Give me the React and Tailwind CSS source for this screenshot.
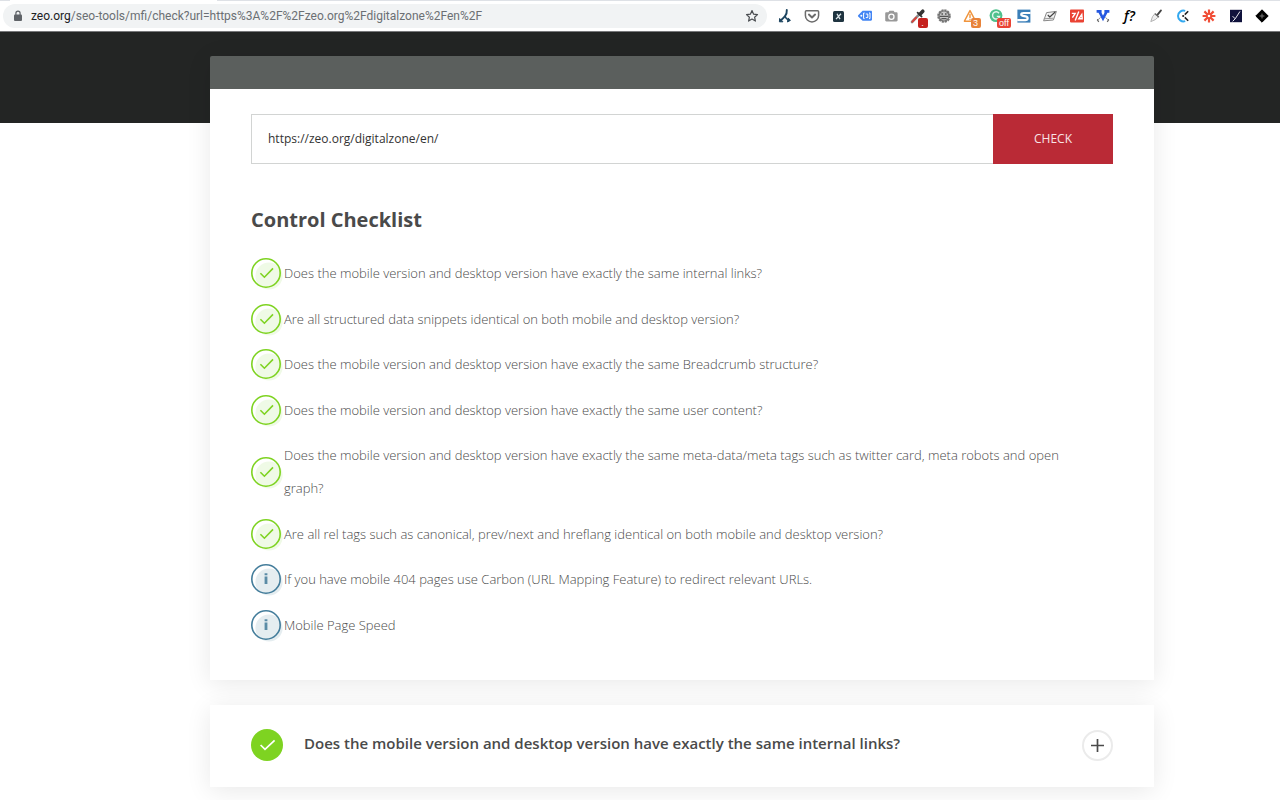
import React, { useState } from 'react';

const checklist = [
  { status: 'ok', text: 'Does the mobile version and desktop version have exactly the same internal links?' },
  { status: 'ok', text: 'Are all structured data snippets identical on both mobile and desktop version?' },
  { status: 'ok', text: 'Does the mobile version and desktop version have exactly the same Breadcrumb structure?' },
  { status: 'ok', text: 'Does the mobile version and desktop version have exactly the same user content?' },
  { status: 'ok', text: 'Does the mobile version and desktop version have exactly the same meta-data/meta tags such as twitter card, meta robots and open graph?' },
  { status: 'ok', text: 'Are all rel tags such as canonical, prev/next and hreflang identical on both mobile and desktop version?' },
  { status: 'info', text: 'If you have mobile 404 pages use Carbon (URL Mapping Feature) to redirect relevant URLs.' },
  { status: 'info', text: 'Mobile Page Speed' },
];

// Toolbar extension icons, all drawn on a 16x16 grid
const extensions = [
  {
    name: 'Link redirect',
    icon: (
      <g fill="none" stroke="#1d4560" strokeLinecap="round">
        <path d="M9.8 2c.2 2.4-.4 4.4-1.8 6.2-1.2 1.6-2.6 2.8-4.4 4.4" strokeWidth="1.9" />
        <path d="M8.2 8.4c.6 1.8 1.8 3 3.4 3.6" strokeWidth="1.6" />
        <path d="M2.6 10.8l-.2 3h3.2z" fill="#1d4560" strokeWidth="1" />
        <path d="M11.4 10.2l2 2.2-2.6 1.4z" fill="#1d4560" strokeWidth="1" />
      </g>
    ),
  },
  {
    name: 'Pocket',
    icon: (
      <g fill="none" stroke="#6c6c6c" strokeWidth="1.5" strokeLinecap="round" strokeLinejoin="round">
        <path d="M2.4 2.8h11.2c.6 0 1 .4 1 1v3.6a6.6 6.6 0 0 1-13.2 0V3.8c0-.6.4-1 1-1z" />
        <path d="M4.9 6.6L8 9.5l3.1-2.9" strokeWidth="2" />
      </g>
    ),
  },
  {
    name: 'XPath',
    icon: (
      <g>
        <rect x="3" y="3" width="11" height="11" rx="1.5" fill="#1f3440" />
        <path d="M7 5.7l3 5.4M11 5.7l-5 5.4" stroke="#dfe8ec" strokeWidth="1.3" fill="none" />
      </g>
    ),
  },
  {
    name: 'Tag assistant',
    icon: (
      <g>
        <path d="M5.6 2.8h8.2c.7 0 1.2.5 1.2 1.2v7.6c0 .7-.5 1.2-1.2 1.2H5.6L1.2 8.6a1 1 0 0 1 0-1.4z" fill="#4285f4" />
        <circle cx="4.3" cy="7.8" r="1" fill="#fff" />
        <path d="M7.6 5h-1v5.6h1M12 5h1v5.6h-1M8.8 6h2v3.6h-2" fill="none" stroke="#fff" strokeWidth="1" />
      </g>
    ),
  },
  {
    name: 'Screenshot',
    icon: (
      <g>
        <path d="M3.4 4.2h2l1-1.4h4.2l1 1.4h1.8c.7 0 1.2.5 1.2 1.2v6.8c0 .7-.5 1.2-1.2 1.2h-10c-.7 0-1.2-.5-1.2-1.2V5.4c0-.7.5-1.2 1.2-1.2z" fill="#999" />
        <circle cx="8.4" cy="8.7" r="2.6" fill="none" stroke="#fff" strokeWidth="1.3" />
      </g>
    ),
  },
  {
    name: 'Color picker',
    badge: '.',
    badgeClass: 'bg-[#c5221f] w-[10px]',
    icon: (
      <g strokeLinecap="round">
        <path d="M2 14l7-7.4" stroke="#8a8a8a" strokeWidth="2.6" />
        <path d="M2.4 13.6L6 9.8" stroke="#d8443c" strokeWidth="2" />
        <path d="M7.6 4.6l4 4" stroke="#333" strokeWidth="1.8" />
        <path d="M10.2 6l2.6-2.8" stroke="#333" strokeWidth="3.6" />
      </g>
    ),
  },
  {
    name: 'Robots settings',
    icon: (
      <g fill="none">
        <circle cx="8" cy="8" r="5.8" stroke="#777" strokeWidth="2" strokeDasharray="2.2 .8" />
        <circle cx="8" cy="8" r="5" fill="#c8c8c8" stroke="#707070" strokeWidth="1.2" />
        <path d="M3.6 8.4h8.8M5.4 10.6h5.2" stroke="#555" strokeWidth="1.2" />
        <path d="M5.4 6h1.6M9 6h1.6" stroke="#555" strokeWidth="1.4" />
      </g>
    ),
  },
  {
    name: 'Issues',
    badge: '3',
    badgeClass: 'bg-[#e8833a] w-[10px]',
    icon: (
      <g fill="none" stroke="#f0943c" strokeWidth="1.4" strokeLinejoin="round" strokeLinecap="round">
        <path d="M7 2.6l5.6 10.6H1.4z" />
        <path d="M7 6.4v3.2M7 11.4v.2" />
      </g>
    ),
  },
  {
    name: 'Grammar check',
    badge: 'off',
    badgeClass: 'bg-[#e94335] w-[14px]',
    icon: (
      <g>
        <circle cx="7" cy="7.6" r="6.4" fill="#4fc08d" />
        <path d="M10 5.2a3.6 3.6 0 1 0 .6 3.2H7.8" fill="none" stroke="#e4f7ee" strokeWidth="1.4" />
      </g>
    ),
  },
  {
    name: 'Similar pages',
    icon: (
      <g fill="none">
        <rect x="1.4" y="1.6" width="13" height="13" fill="#3b7fb8" />
        <path d="M14.6 5H7.4C4.6 5 4.6 7.4 7 7.8l2.6.5c3 .6 2.6 3.9-.4 3.9H1.2" stroke="#fff" strokeWidth="2.2" />
      </g>
    ),
  },
  {
    name: 'Check my links',
    icon: (
      <g fill="none" stroke="#666" strokeWidth="1" strokeLinejoin="round">
        <path d="M4.6 4.6l9.8-1.2-3 8.6-9.8.8z" fill="#f2f2f2" stroke="#888" />
        <path d="M1.8 10.8l9.8-.6" stroke="#999" />
        <path d="M5.8 7l2 2 5.4-5" stroke="#444" strokeWidth="1.2" />
      </g>
    ),
  },
  {
    name: 'Redirect path',
    icon: (
      <g>
        <rect x="1" y="1.6" width="14" height="12.8" rx=".8" fill="#ea4233" />
        <path d="M2.8 5.4h3.4L3.4 9.6M9.8 3.6L6.2 12.4M13.2 10.8H9.8l3-4.4z" fill="none" stroke="#fff" strokeWidth="1.4" />
      </g>
    ),
  },
  {
    name: 'Keyword surfer',
    icon: (
      <g fill="none">
        <path d="M1.6 3.4h5M9.4 3.4h5M4.4 3.6L8 10.4l3.6-6.8" stroke="#2457e0" strokeWidth="2.6" />
        <path d="M5.4 9.4c-1 1-1 2.2-3.4 2.2M10.6 9.4c1 1 1 2.2 3.4 2.2" stroke="#888" strokeWidth="1" />
        <path d="M2.2 11.6l1.6 2.2M13.8 11.6l-1.6 2.2" stroke="#666" strokeWidth="1.2" />
      </g>
    ),
  },
  { name: 'WhatFont', label: 'f?' },
  {
    name: 'Cache cleaner',
    icon: (
      <g fill="none" strokeLinecap="round">
        <path d="M13 2.4L9.6 6.6" stroke="#444" strokeWidth="1.8" />
        <path d="M7 6.2l3.2 2.8L7.4 11.6l-4.6 2L4.4 9z" fill="#eee" stroke="#aaa" strokeWidth=".9" />
        <path d="M7.2 5.8l3.4 3" stroke="#666" strokeWidth="1.2" />
      </g>
    ),
  },
  {
    name: 'Clockify',
    icon: (
      <g fill="none" strokeWidth="2">
        <path d="M10.2 2.9A5.4 5.4 0 1 0 10.2 13.1" stroke="#32a8ef" />
        <path d="M9.8 6.6l3.4-3.4M9.8 9.4l3.4 3.4" stroke="#222" strokeWidth="1.6" />
        <circle cx="8.2" cy="8" r="1.1" fill="#222" stroke="none" />
      </g>
    ),
  },
  {
    name: 'Zapier',
    icon: (
      <g fill="none" stroke="#f04e37" strokeWidth="2.2">
        <path d="M8 1.6v4.6M8 9.8v4.6M1.6 8h4.6M9.8 8h4.6M3.4 3.4l3.3 3.3M9.3 9.3l3.3 3.3M12.6 3.4L9.3 6.7M6.7 9.3l-3.3 3.3" />
        <circle cx="8" cy="8" r="2" strokeWidth="1.4" />
      </g>
    ),
  },
  {
    name: 'Xenu',
    icon: (
      <g>
        <rect x="2" y="1.8" width="12" height="12.4" fill="#10123c" />
        <path d="M4.6 8.2l2.6 2.6 4.8-7.4M4.6 13.4l2.6-2.6" fill="none" stroke="#e8e8f0" strokeWidth="1" />
      </g>
    ),
  },
  {
    name: 'Diamond',
    icon: (
      <g>
        <path d="M8 1.8L14.2 8 8 14.2 1.8 8z" fill="#000" stroke="#000" strokeWidth="1" strokeLinejoin="round" />
        <path d="M8 5.6v4.8M5.6 8h4.8" stroke="#777" strokeWidth="1" />
      </g>
    ),
  },
];

const ExtensionButton = ({ name, icon, label, badge, badgeClass }) => (
  <button type="button" aria-label={name} className="relative flex h-4 w-4 items-center justify-center">
    {icon && <svg viewBox="0 0 16 16" className="h-4 w-4">{icon}</svg>}
    {label && <span className="font-['Open_Sans',sans-serif] text-sm font-semibold italic leading-4 text-black">{label}</span>}
    {badge && (
      <span className={`absolute -bottom-1 left-2 h-[10px] rounded-xs text-center font-['Liberation_Sans',sans-serif] text-[9px] leading-[10px] text-white ${badgeClass}`}>
        {badge}
      </span>
    )}
  </button>
);

const BrowserBar = () => (
  <div className="border-b border-[#77787a] bg-white font-[Roboto,sans-serif]">
    <div className="flex h-px">
      <div className="w-[10px] bg-[#dee1e6]" />
      <div className="w-[207px] bg-white" />
      <div className="flex-1 bg-[#dee1e6]" />
    </div>
    <div className="flex h-[30px] items-center pl-[3px] pr-[10px]">
      <div className="flex h-6 flex-1 items-center rounded-full bg-[#f1f3f4] pl-[10px] pr-2 text-xs">
        <svg viewBox="0 0 10 12" className="mr-2 h-3 w-[10px]">
          <rect x="1" y="4.6" width="8" height="6.4" rx="1" fill="#5f6368" />
          <path d="M2.9 5V3.2a2.1 2.1 0 0 1 4.2 0V5" fill="none" stroke="#5f6368" strokeWidth="1.2" />
        </svg>
        <label htmlFor="address" className="text-[#202124]">zeo.org</label>
        <input
          id="address"
          type="text"
          readOnly
          className="min-w-0 flex-1 bg-transparent text-[#6b6f73] outline-none"
          value="/seo-tools/mfi/check?url=https%3A%2F%2Fzeo.org%2Fdigitalzone%2Fen%2F"
        />
        <button type="button" aria-label="Bookmark this page">
          <svg viewBox="0 0 14 14" className="h-[14px] w-[14px]">
            <path d="M7 1.6l1.6 3.6 3.9.4-2.9 2.6.8 3.9L7 10.1l-3.4 2 .8-3.9-2.9-2.6 3.9-.4z" fill="none" stroke="#4a4d51" strokeWidth="1.2" strokeLinejoin="round" />
          </svg>
        </button>
      </div>
      <div className="ml-[10px] flex w-[493px] items-center justify-between">
        {extensions.map((ext) => (
          <ExtensionButton key={ext.name} {...ext} />
        ))}
      </div>
    </div>
  </div>
);

const StatusIcon = ({ status }) => (
  <svg viewBox="0 0 33 33" className="h-[33px] w-[33px] shrink-0">
    <circle cx="18" cy="19" r="13.6" fill={status === 'ok' ? '#effae6' : '#e5edf0'} />
    <circle cx="15" cy="16" r="14.2" fill="none" stroke={status === 'ok' ? '#7ed321' : '#447d9b'} strokeWidth="1.6" />
    {status === 'ok' ? (
      <path d="M9.4 16.2l4 4 8.6-8.8" fill="none" stroke="#7ed321" strokeWidth="1.6" />
    ) : (
      <path d="M13.6 10.2h2.8v2h-2.8zM13.6 13.6h2.8v7.4h-2.8z" fill="#5b8ca6" />
    )}
  </svg>
);

const App = () => {
  const [url, setUrl] = useState('https://zeo.org/digitalzone/en/');
  const [open, setOpen] = useState(false);

  return (
    <div className="bg-white font-['Open_Sans',sans-serif]">
      <BrowserBar />
      <div className="h-[91px] bg-[#232524]" />

      <main className="relative -mt-[67px] pb-4 pl-[210px] pr-[126px]">
        {/* Checker form and checklist */}
        <section className="mb-[25px] shadow-[0_4px_24px_rgba(0,0,0,0.09)]">
          <div className="h-[33px] rounded-t-xs bg-[#5b5f5d]" />
          <div className="bg-white px-[41px] pb-[38px] pt-[25px]">
            <form className="flex h-[50px]" onSubmit={(e) => e.preventDefault()}>
              <input
                type="text"
                aria-label="Page URL"
                className="min-w-0 flex-1 border border-r-0 border-[#d2d4d3] px-4 text-xs text-[#333] outline-none"
                value={url}
                onChange={(e) => setUrl(e.target.value)}
              />
              <button type="submit" className="w-[120px] bg-[#ba2a36] text-xs text-[#f8e4e6]">CHECK</button>
            </form>

            <h2 className="mt-[41px] text-xl font-bold leading-[30px] text-[#4a4a4a]">Control Checklist</h2>
            <ul className="mt-[22px] flex min-h-[385px] flex-col justify-between">
              {checklist.map((item) => (
                <li key={item.text} className="flex items-center pr-5">
                  <StatusIcon status={item.status} />
                  <span className="text-[13px] font-light leading-[33px] text-[#4a4a4a]">{item.text}</span>
                </li>
              ))}
            </ul>
          </div>
        </section>

        {/* Result accordion */}
        <section className="flex h-[82px] items-center bg-white px-[41px] pb-[2px] shadow-[0_4px_24px_rgba(0,0,0,0.09)]">
          <svg viewBox="0 0 32 32" className="h-8 w-8 shrink-0">
            <circle cx="16" cy="16" r="16" fill="#7ed321" />
            <path d="M9.6 16l4.4 4.4 9.6-9" fill="none" stroke="#fff" strokeWidth="1.7" />
          </svg>
          <h3 className="ml-[21px] flex-1 pb-1 text-[15px] font-semibold leading-6 text-[#4a4a4a]">
            {checklist[0].text}
          </h3>
          <button
            type="button"
            aria-label="Toggle details"
            aria-expanded={open}
            className="flex h-[31px] w-[31px] items-center justify-center rounded-full border-2 border-[#ebebeb]"
            onClick={() => setOpen(!open)}
          >
            <svg viewBox="0 0 13 13" className="h-[13px] w-[13px]">
              <path d="M6.5 0v13M0 6.5h13" stroke="#4a4a4a" strokeWidth="1.7" />
            </svg>
          </button>
        </section>
      </main>
    </div>
  );
};

export default App;
